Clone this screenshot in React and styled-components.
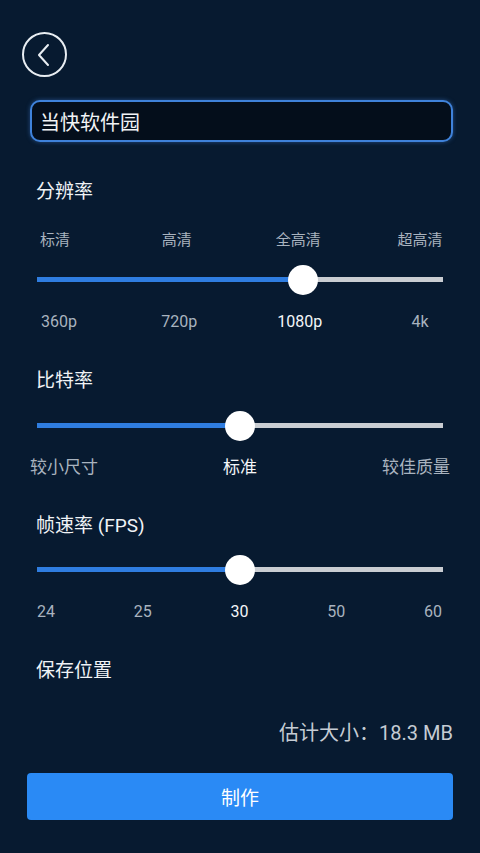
import styled, { createGlobalStyle } from "styled-components"

const Global = createGlobalStyle`
    html, body {
        margin: 0;
        padding: 0;
        background: #071a30;
    }
    body {
        font-family: Roboto, "Noto Sans CJK SC", "Noto Sans", sans-serif;
    }
`

const Screen = styled.div`
    width: 480px;
    height: 853px;
    background: #071a30;
    box-sizing: border-box;
    padding: 32px 27px 0 22px;
    display: flex;
    flex-direction: column;
    color: #ffffff;
    overflow: hidden;
`

const BackButton = styled.button`
    width: 45px;
    height: 45px;
    border-radius: 50%;
    border: 2px solid #e8edf2;
    background: transparent;
    padding: 0;
    display: flex;
    align-items: center;
    justify-content: center;
    color: #e8edf2;
    cursor: pointer;
`

const NameInput = styled.div`
    margin: 23px 0 0 8px;
    height: 42px;
    box-sizing: border-box;
    border: 2.5px solid #3f82da;
    border-radius: 10px;
    background: #040e1b;
    box-shadow: 0 0 4px rgba(63, 130, 218, 0.5);
    display: flex;
    align-items: center;
    padding-left: 8px;
    font-size: 20px;
    color: #f2f4f6;
    font-family: "Noto Sans CJK SC", sans-serif;
`

const SectionTitle = styled.div`
    margin: ${p => p.$top}px 0 0 14px;
    font-size: 19px;
    line-height: 26px;
    color: #f0f3f6;
`

const LabelRow = styled.div`
    display: flex;
    justify-content: space-between;
    margin: ${p => p.$top}px ${p => p.$right}px 0 ${p => p.$left}px;
    font-size: ${p => p.$size}px;
    line-height: 22px;
`

const Label = styled.span`
    width: ${p => (p.$w ? p.$w + "px" : "auto")};
    text-align: center;
    white-space: nowrap;
    color: ${p => (p.$active ? "#f4f6f8" : "#a9b3bf")};
`

const Track = styled.div`
    position: relative;
    margin: ${p => p.$top}px 10px 0 15px;
    height: 5px;
    background: #c9cdd2;
`

const Fill = styled.div`
    height: 100%;
    background: #2f7de0;
`

const Thumb = styled.div`
    position: absolute;
    top: 50%;
    width: 30px;
    height: 30px;
    border-radius: 50%;
    background: #ffffff;
    transform: translate(-50%, -50%);
`

const Estimate = styled.div`
    margin: 36px 0 0 0;
    text-align: right;
    font-size: 20px;
    line-height: 26px;
    color: #c5ccd4;
`

const MakeButton = styled.button`
    margin: 27px 0 0 5px;
    height: 47px;
    border: none;
    border-radius: 4px;
    background: #2a8af5;
    color: #ffffff;
    font-size: 19px;
    font-family: "Noto Sans CJK SC", sans-serif;
    cursor: pointer;
`

function Slider({ value, top }) {
    return (
        <Track $top={top}>
            <Fill style={{ width: value + "%" }} />
            <Thumb style={{ left: value + "%" }} />
        </Track>
    )
}

export default function App() {
    return (
        <Screen>
            <Global />
            <BackButton>
                <svg width="22" height="26" viewBox="0 0 22 26" fill="none">
                    <path d="M14 3 L5 13 L14 23" stroke="#e8edf2" strokeWidth="2" strokeLinecap="round" strokeLinejoin="round" />
                </svg>
            </BackButton>

            <NameInput>当快软件园</NameInput>

            <SectionTitle $top={37}>分辨率</SectionTitle>
            <LabelRow $top={24} $left={3} $right={3} $size={15}>
                <Label $w={60}>标清</Label>
                <Label $w={60}>高清</Label>
                <Label $w={60}>全高清</Label>
                <Label $w={60}>超高清</Label>
            </LabelRow>
            <Slider value={65.5} top={26} />
            <LabelRow $top={29} $left={7} $right={3} $size={16}>
                <Label $w={60}>360p</Label>
                <Label $w={60}>720p</Label>
                <Label $w={60} $active>1080p</Label>
                <Label $w={60}>4k</Label>
            </LabelRow>

            <SectionTitle $top={35}>比特率</SectionTitle>
            <Slider value={50} top={29} />
            <LabelRow $top={28} $left={8} $right={3} $size={17}>
                <Label>较小尺寸</Label>
                <Label $active>标准</Label>
                <Label>较佳质量</Label>
            </LabelRow>

            <SectionTitle $top={35}>帧速率 (FPS)</SectionTitle>
            <Slider value={50} top={28} />
            <LabelRow $top={29} $left={4} $right={0} $size={16}>
                <Label $w={40}>24</Label>
                <Label $w={40}>25</Label>
                <Label $w={40} $active>30</Label>
                <Label $w={40}>50</Label>
                <Label $w={40}>60</Label>
            </LabelRow>

            <SectionTitle $top={35}>保存位置</SectionTitle>

            <Estimate>估计大小：18.3 MB</Estimate>

            <MakeButton>制作</MakeButton>
        </Screen>
    )
}
